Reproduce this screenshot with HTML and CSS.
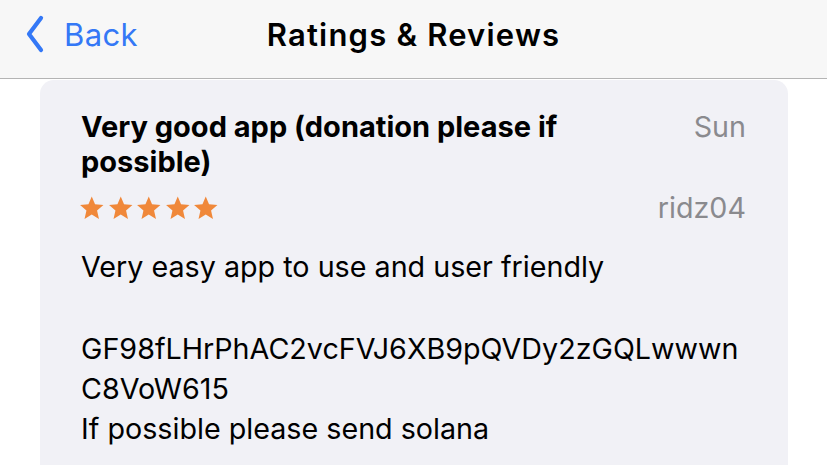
FILE: index.html
```html
<!DOCTYPE html>
<html lang="en">
<head>
  <meta charset="UTF-8">
  <meta name="viewport" content="width=device-width, initial-scale=1">
  <title>Ratings &amp; Reviews</title>
  <link rel="stylesheet" href="styles.css">
</head>
<body>

<header class="navbar">
  <a class="back-btn" href="#">
    <svg class="chevron" width="20" height="38" viewBox="0 0 20 38">
      <path d="M16 3 L4 19 L16 35" fill="none" stroke="currentColor" stroke-width="4.2" stroke-linecap="round" stroke-linejoin="round"/>
    </svg>
    <span>Back</span>
  </a>
  <h1 class="nav-title">Ratings &amp; Reviews</h1>
  <div class="nav-spacer"></div>
</header>

<main class="content">
  <div class="review-card">
    <div class="review-head">
      <h2 class="review-title">Very good app (donation please if possible)</h2>
      <span class="review-date">Sun</span>
    </div>
    <div class="review-meta">
      <div class="stars">
        <svg viewBox="0 0 24 24"><path d="M12 1.5l3.1 7.3 7.9.7-6 5.2 1.8 7.8L12 18.4l-6.8 4.1 1.8-7.8-6-5.2 7.9-.7z"/></svg>
        <svg viewBox="0 0 24 24"><path d="M12 1.5l3.1 7.3 7.9.7-6 5.2 1.8 7.8L12 18.4l-6.8 4.1 1.8-7.8-6-5.2 7.9-.7z"/></svg>
        <svg viewBox="0 0 24 24"><path d="M12 1.5l3.1 7.3 7.9.7-6 5.2 1.8 7.8L12 18.4l-6.8 4.1 1.8-7.8-6-5.2 7.9-.7z"/></svg>
        <svg viewBox="0 0 24 24"><path d="M12 1.5l3.1 7.3 7.9.7-6 5.2 1.8 7.8L12 18.4l-6.8 4.1 1.8-7.8-6-5.2 7.9-.7z"/></svg>
        <svg viewBox="0 0 24 24"><path d="M12 1.5l3.1 7.3 7.9.7-6 5.2 1.8 7.8L12 18.4l-6.8 4.1 1.8-7.8-6-5.2 7.9-.7z"/></svg>
      </div>
      <span class="review-author">ridz04</span>
    </div>
    <div class="review-body">
      <p>Very easy app to use and user friendly</p>
      <p>GF98fLHrPhAC2vcFVJ6XB9pQVDy2zGQLwwwn<br>C8VoW615<br>If possible please send solana</p>
    </div>
  </div>
</main>

</body>
</html>
```

FILE: styles.css
```css
body {
  font-family: Inter, "Noto Sans", sans-serif;
  margin: 0;
  padding: 0;
  background: #ffffff;
  color: #000;
  overflow: hidden;
}

.navbar {
  display: grid;
  grid-template-columns: 1fr auto 1fr;
  align-items: center;
  height: 68px;
  padding-bottom: 10px;
  background: #f7f7f7;
  border-bottom: 1px solid #b4b4b4;
}

.back-btn {
  display: flex;
  align-items: center;
  gap: 19px;
  padding-left: 25px;
  color: #3478f6;
  text-decoration: none;
  font-size: 31px;
  letter-spacing: 0.4px;
}

.chevron {
  flex: none;
}

.nav-title {
  margin: 0;
  font-size: 31px;
  font-weight: 600;
  letter-spacing: 1.2px;
}

.content {
  padding: 1px 39px 0 40px;
}

.review-card {
  background: #f1f1f6;
  border-radius: 14px;
  padding: 29px 42px 30px 41px;
  min-height: 420px;
}

.review-head {
  display: flex;
  justify-content: space-between;
  align-items: flex-start;
  gap: 30px;
}

.review-title {
  margin: 0;
  font-size: 29px;
  font-weight: 700;
  line-height: 35px;
  max-width: 520px;
}

.review-date,
.review-author {
  color: #8a8a8e;
  font-size: 28.7px;
  line-height: 35px;
}

.review-meta {
  display: flex;
  justify-content: space-between;
  align-items: center;
  margin-top: 11px;
}

.stars {
  display: flex;
  gap: 3px;
  margin-left: -2px;
}

.stars svg {
  width: 25.5px;
  height: 25.5px;
  fill: #f0883a;
}

.review-body {
  margin-top: 22px;
  font-size: 28.7px;
  line-height: 40px;
}

.review-body p {
  margin: 0 0 42px 0;
}
```
